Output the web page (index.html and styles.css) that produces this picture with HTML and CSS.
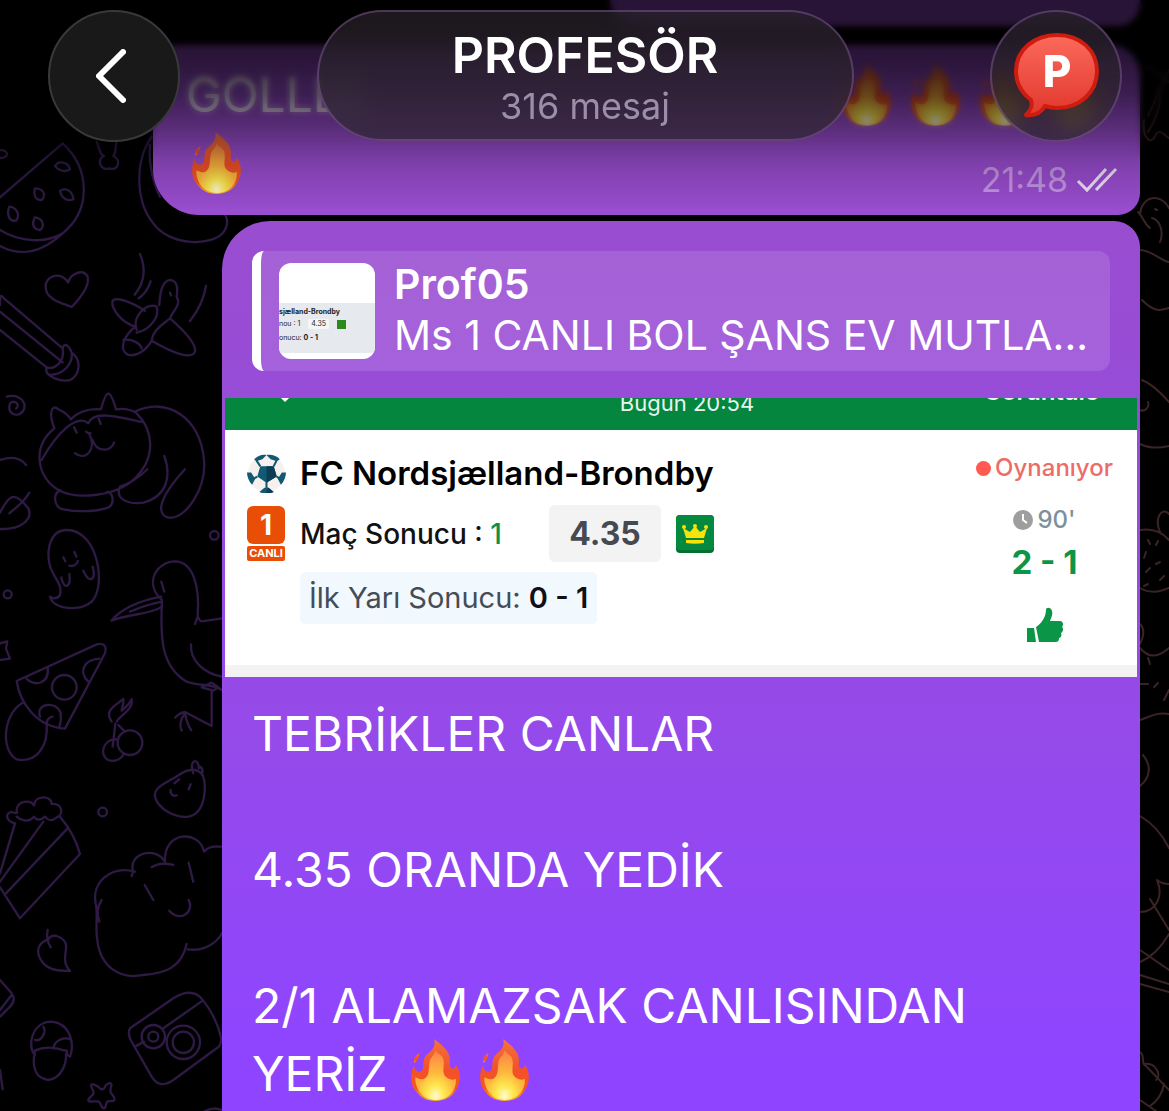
FILE: index.html
```html
<!DOCTYPE html>
<html lang="tr">
<head>
  <meta charset="UTF-8">
  <meta name="viewport" content="width=device-width, initial-scale=1.0">
  <title>PROFESÖR</title>
  <link rel="stylesheet" href="styles.css">
</head>
<body>
  <!-- shared icons -->
  <svg class="defs" aria-hidden="true">
    <defs>
      <linearGradient id="flameOuter" x1="0" y1="0" x2="0" y2="1">
        <stop offset="0" stop-color="#f4743b"/>
        <stop offset="0.5" stop-color="#f2502a"/>
        <stop offset="0.8" stop-color="#f9561d"/>
        <stop offset="1" stop-color="#fdb52a"/>
      </linearGradient>
      <radialGradient id="flameInner" cx="0.5" cy="0.92" r="0.85">
        <stop offset="0" stop-color="#fffbd0"/>
        <stop offset="0.25" stop-color="#ffe84f"/>
        <stop offset="0.55" stop-color="#ffb83d"/>
        <stop offset="1" stop-color="#fb8a45"/>
      </radialGradient>
      <linearGradient id="bubbleRed" x1="0" y1="0" x2="0" y2="1">
        <stop offset="0" stop-color="#fb6a5c"/>
        <stop offset="1" stop-color="#e2372c"/>
      </linearGradient>
    </defs>
    <symbol id="fire" viewBox="0 0 48 61">
      <path fill="url(#flameOuter)" d="M23 0C26 3 30 5 33 9C37 13 39 18 38 24C38 27 39 29 41 29C43 29 44 27 44 25C47 29 48 34 48 38C48 43 46 48 43 52C39 58 32 61 24 61C16 61 10 58 6 53C2 49 0 44 0 38C0 33 1 29 3 26C3 29 4 31 7 32C10 33 12 30 12 26C12 21 13 17 17 14C20 12 22 9 23 6Z"/>
      <path fill="url(#flameOuter)" d="M8 14C5 16 2 18 3 23C6 22 8 19 8 14Z"/>
      <path fill="url(#flameInner)" d="M24 11C23 17 18 18 18 24C17 31 18 36 13 39C9 41 6 38 4 38C4 48 10 60 24 60C38 60 45 49 44 39C41 41 36 40 33 36C30 31 34 24 31 18C29 15 25 14 24 11Z"/>
    </symbol>
  </svg>

  <!-- wallpaper, left side -->
  <svg class="doodles doodles-left" viewBox="0 0 240 1111" aria-hidden="true">
    <g transform="translate(0 130) scale(0.3333)">
      <path d="M0 202L188 40C270 115 275 240 188 310C120 372 60 380 0 348M0 300C60 338 140 340 188 310"/>
      <path d="M165 108C175 90 205 95 210 118C195 128 175 122 165 108ZM105 175C130 175 140 195 125 210C105 210 100 195 105 175ZM180 182C200 170 218 185 220 208C200 215 185 205 180 182ZM28 230C50 232 62 255 48 272C25 275 20 250 28 230ZM105 262C130 265 135 290 120 300C98 298 95 280 105 262Z"/>
      <path d="M0 60C28 60 28 84 0 84M290 35C300 60 300 75 312 78C290 85 300 125 327 115C355 125 365 90 340 78C350 65 345 50 350 35"/>
      <path d="M455 20C400 100 410 220 460 280C510 350 640 350 672 305C690 275 680 250 660 245M450 45C445 100 460 160 480 200"/>
      <path d="M205 458C180 420 135 440 137 470C137 510 190 520 215 531C240 505 270 470 263 440C250 415 210 430 205 458Z"/>
      <path d="M420 372C440 420 432 460 404 494M452 454C445 475 435 492 416 505M618 468C612 505 592 545 570 573"/>
      <path d="M478 525C480 480 490 450 512 450C535 455 533 480 530 500C545 525 520 540 510 565C550 600 590 640 585 665C575 690 520 670 455 632C440 660 410 680 385 675C355 660 370 620 405 590C360 575 335 535 337 515C345 495 400 520 435 542M410 600C395 560 440 515 470 530C480 560 450 600 410 608M510 565C480 590 460 600 455 632M370 630C395 625 420 640 425 655M510 488L513 496"/>
      <path d="M0 600L140 712C130 740 190 760 215 748C240 730 245 690 215 668C205 640 190 640 188 655L12 505C0 490 0 500 0 525M0 545L188 697M140 712C160 720 195 700 188 655M150 735C190 735 220 700 215 668"/>
      <path d="M20 800C60 790 85 820 68 845C50 865 20 850 30 820C45 808 62 825 48 836"/>
      <path d="M163 895C145 850 155 820 175 838C190 845 205 855 212 868C240 840 270 835 303 838C320 775 330 775 348 838C370 835 395 840 410 850C460 900 470 980 405 1045C350 1100 230 1110 175 1080C110 1040 95 950 163 895M125 990C170 910 230 850 265 880C280 840 350 860 425 876M405 845C500 800 600 860 612 990C620 1070 560 1170 505 1163C465 1150 480 1100 555 1018M493 978C515 1040 500 1100 430 1118C380 1125 345 1105 360 1070C390 1060 420 1040 442 1018"/>
      <path d="M222 892L230 908M296 866L302 882M258 905C270 915 275 905 268 912C290 955 260 995 225 970M278 930C290 970 335 965 342 938M180 1080C155 1095 165 1135 190 1138C235 1147 290 1145 325 1133C345 1120 340 1090 322 1085"/>
      <path d="M0 990C30 980 60 980 78 1005M0 1148C30 1090 45 1085 85 1135C100 1170 60 1200 0 1197M88 1088C70 1120 50 1130 28 1150"/>
    </g>
    <g transform="translate(0 500) scale(0.3333)">
      <path d="M200 90C150 90 140 150 148 190C155 230 190 250 180 285C170 300 155 295 150 290C160 330 240 335 275 305C320 260 295 90 200 90ZM190 172L196 184M223 156L229 170M208 197C218 200 230 195 234 183M184 232C190 270 215 265 208 222M250 212C265 250 290 245 278 200"/>
      <circle cx="23" cy="283" r="12"/><circle cx="643" cy="106" r="13"/><circle cx="308" cy="936" r="13"/>
      <path d="M0 430L22 424L18 446L30 476L0 480"/>
      <path d="M486 300C430 250 470 185 525 184C580 185 600 260 593 350L585 372M593 350C600 360 600 365 605 364L666 355M486 300C480 420 485 500 560 545C600 560 640 550 666 570M484 290C430 300 370 320 334 362C390 340 450 345 486 320M390 335C430 318 460 310 486 305M484 245L493 275M573 433C570 480 610 520 666 530M605 562L635 548L655 562L640 572ZM635 572V678L555 636C540 640 532 645 526 653M555 640C540 660 538 680 545 692M555 640C560 665 565 680 574 691"/>
      <path d="M50 543L290 433C315 428 320 440 315 460L195 686C110 680 60 610 50 543ZM80 536C100 560 150 555 143 500M298 476C250 480 235 515 265 545M120 650C105 610 170 600 182 640C185 660 180 675 178 682M68 608C10 640 0 750 50 778C110 790 145 740 140 670C140 655 155 650 158 650"/>
      <circle cx="193" cy="562" r="37"/>
      <circle cx="390" cy="728" r="37"/><path d="M352 718C310 715 295 765 325 780C345 788 365 775 370 765M338 740L346 672M355 675L375 695M335 665C310 630 350 615 370 597C372 615 365 625 365 632M365 632C380 620 390 610 395 598C400 630 360 645 350 665"/>
      <path d="M545 820C500 850 460 860 465 890C475 930 530 955 565 950C620 940 620 850 608 825C590 800 560 810 545 820ZM580 820C565 780 595 770 597 805M600 800C610 805 608 815 606 825M512 870C510 885 522 890 530 886M523 850L537 838M566 868L572 853"/>
      <path d="M45 970C20 965 12 940 35 936C50 942 55 938 50 936C45 905 90 895 102 916C105 885 155 885 155 912C190 910 190 945 170 952C150 970 140 955 135 950C115 970 100 950 102 950C85 970 60 960 50 950"/>
    </g>
    <g transform="translate(0 780) scale(0.3333)">
      <path d="M45 130L0 280M130 125L0 305M205 143L18 340M180 110C210 145 230 185 240 222L60 415L0 322"/>
      <path d="M143 450C138 470 145 490 152 502M145 478C110 490 105 520 130 550C155 575 190 572 210 573C170 530 230 490 170 468C160 466 150 470 145 478Z"/>
      <path d="M395 288C400 275 400 275 398 270C390 215 470 200 495 245C490 150 600 150 612 215C630 195 650 200 666 200M405 275C330 255 275 310 287 370C295 400 285 440 292 480C300 560 360 600 430 585C500 580 545 560 560 492M563 508C610 515 650 490 666 460M455 262C475 248 500 250 520 255M434 315L460 360M566 248L580 305M508 392C540 430 585 395 566 360M305 360C290 385 290 400 298 425"/>
      <path d="M0 600L35 640C45 655 40 670 30 680L0 710M35 645L0 690"/>
      <path d="M105 825C80 800 95 725 155 725C210 730 225 790 210 830L198 822C205 815 200 810 195 812C160 800 130 800 105 812C95 860 105 895 145 900C185 895 200 850 198 822M105 780C125 785 140 755 130 740M160 805C165 780 190 770 212 778"/>
      <path d="M390 745L520 655C560 630 590 635 610 662C640 700 655 735 664 775C664 790 660 800 650 805L520 900C490 920 470 915 455 890L392 780C385 765 385 755 390 745ZM405 800L432 785M490 745L608 662"/>
      <circle cx="460" cy="770" r="35"/><circle cx="460" cy="770" r="15"/><circle cx="550" cy="787" r="50"/><circle cx="550" cy="787" r="32"/>
      <path d="M300 925C305 930 312 928 314 922C318 912 332 905 334 912C336 920 328 932 332 938C336 944 348 955 342 962C336 966 325 960 321 966C317 974 318 984 312 985C304 985 302 968 297 965C290 962 268 968 265 962C264 954 280 946 281 940C282 932 270 918 274 914C282 910 294 920 300 925Z"/>
      <path d="M0 870L8 928M615 993C640 982 650 985 666 990"/>
    </g>
  </svg>

  <!-- wallpaper, right side -->
  <svg class="doodles doodles-right" viewBox="0 0 69 1111" aria-hidden="true">
    <path d="M46 64C54 72 64 78 69 82M44 120C42 140 52 146 56 134C62 128 66 138 69 138M48 132C60 112 62 100 58 88M48 116L69 70"/>
    <path d="M40 214C42 196 60 192 69 208M38 212C44 218 44 224 50 228M52 218C60 220 64 232 60 242M55 209L57 210M40 250C52 250 62 262 69 262M42 300C52 310 58 312 69 308"/>
    <path d="M42 380C52 384 62 394 69 402M40 410C44 412 50 408 48 402M40 444C50 449 60 448 69 446"/>
    <path d="M40 530C52 528 62 532 69 540M60 532C54 518 62 506 69 514M40 588C50 594 60 592 69 588M48 540L50 544M58 541L56 545M46 552L44 558M60 562L56 564M50 568L46 572M64 576L60 580M48 584L44 586"/>
    <path d="M40 624C46 630 42 640 40 644M40 648C50 660 60 656 69 648M48 658L50 664M40 684H48M54 687L58 683M64 700L69 690M40 720C48 718 54 712 69 714M43 755C52 766 50 778 40 786M40 816C54 824 64 838 69 848"/>
    <path d="M57 880C62 884 66 884 69 884M57 880C64 896 56 912 40 912M50 899L69 930M69 934C62 946 54 956 40 962M40 950L69 970M40 975L69 984M40 984L69 992M40 1052C46 1056 40 1064 46 1066L69 1090M44 1064C56 1062 62 1076 56 1080M40 1100L56 1111M64 1084C62 1096 56 1102 50 1106"/>
  </svg>

  <header class="topbar">
    <button class="glass round" type="button" aria-label="Geri">
      <svg class="chevron" viewBox="0 0 30 54"><path d="M27 3L3 27L27 51"/></svg>
    </button>
    <div class="glass title">
      <h1>PROFESÖR</h1>
      <p>316 mesaj</p>
    </div>
    <button class="glass round" type="button" aria-label="Profil">
      <svg class="avatar" viewBox="0 0 85 86">
        <path d="M43 2C66 2 83 17 83 38C83 60 65 75 43 75C38 75 34 74 31 73C27 80 20 83 12 82C17 77 19 73 17 67C8 60 2 50 2 38C2 17 20 2 43 2Z"/>
        <text x="43" y="54">P</text>
      </svg>
    </button>
  </header>

  <main class="chat">
    <div class="bubble bubble-cut"></div>

    <article class="bubble bubble-goal">
      <div class="line">
        <span>GOLLLL</span>
        <span class="fires">
          <svg class="fire"><use href="#fire"/></svg>
          <svg class="fire"><use href="#fire"/></svg>
          <svg class="fire"><use href="#fire"/></svg>
          <svg class="fire"><use href="#fire"/></svg>
        </span>
      </div>
      <div class="line">
        <svg class="fire"><use href="#fire"/></svg>
        <span class="meta">
          <time>21:48</time>
          <svg class="ticks" viewBox="0 0 42 26"><path d="M2 14L11 23L30 2M20 23L40 2"/></svg>
        </span>
      </div>
    </article>

    <article class="bubble bubble-win">
      <blockquote class="reply">
        <div class="thumb" aria-hidden="true">
          <div class="thumb-match">
            <b>sjælland-Brondby</b>
            <div class="thumb-row"><span>nou : 1</span><i>4.35</i><em></em></div>
            <div class="thumb-row"><span>onucu: <strong>0 - 1</strong></span></div>
          </div>
        </div>
        <div class="reply-text">
          <strong>Prof05</strong>
          <span>Ms 1 CANLI BOL ŞANS EV MUTLA...</span>
        </div>
      </blockquote>

      <section class="coupon">
        <div class="coupon-top">
          <svg class="back-tip" viewBox="0 0 20 12"><path d="M2 0L10 8L18 0"/></svg>
          <span class="date">Bugün 20:54</span>
          <span class="view">Görüntüle</span>
        </div>
        <div class="coupon-body">
          <div class="match">
            <svg class="ball" viewBox="0 0 38 38">
              <circle cx="19" cy="19" r="18" fill="#f6f1ee"/>
              <path fill="#125a74" d="M13 12L26 12L29 22L19 28L10 22ZM7 5C11 1 16 0 19 1L15 5L9 7ZM19 1C24 0 29 2 32 5L29 7L23 5ZM0 18L4 18L8 24L5 30C2 27 0 22 0 18ZM38 18L34 18L30 24L33 30C36 27 38 22 38 18ZM12 37L17 33L21 33L26 37C22 39 16 39 12 37Z"/>
              <path fill="#0c3d54" d="M19 12L26 12L29 22L19 28ZM19 33H21L26 37C24 38 22 38 19 38Z"/>
              <path stroke="#125a74" stroke-width="2" d="M13 12L9 6M26 12L29 6M29 22L33 25M10 22L5 25M19 27V35"/>
            </svg>
            <h2>FC Nordsjælland-Brondby</h2>

            <div class="live"><b>1</b><small>CANLI</small></div>
            <div class="pick">
              <span>Maç Sonucu : <em>1</em></span>
              <strong class="odds">4.35</strong>
              <svg class="crown" viewBox="0 0 38 38">
                <rect width="38" height="38" rx="4" fill="#04702f"/>
                <rect width="38" height="35" rx="4" fill="#04893f"/>
                <path fill="#f6e30a" d="M10 23L7 13L14 17L19 11L24 17L31 13L28 23ZM10 25H28V28C22 29 16 29 10 28Z"/>
                <circle cx="8" cy="12" r="2" fill="#f6e30a"/><circle cx="19" cy="11" r="2" fill="#f6e30a"/><circle cx="30" cy="12" r="2" fill="#f6e30a"/>
              </svg>
            </div>

            <div class="half">İlk Yarı Sonucu: <b>0 - 1</b></div>
          </div>

          <div class="status">
            <span class="playing">Oynanıyor</span>
            <span class="minute">
              <svg viewBox="0 0 20 20"><circle cx="10" cy="10" r="10" fill="#9e9e9e"/><path d="M10 4V10L14 13" fill="none" stroke="#fff" stroke-width="2"/></svg>
              90'
            </span>
            <strong class="score">2 - 1</strong>
            <svg class="thumb-up" viewBox="0 0 36 36">
              <path d="M0 21H7L9 35H0ZM9 20C14 17 19 10 19 3C19 0 24 0 25 4C26 8 24 11 23 14H33C36 14 37 18 35 20C37 22 36 25 34 26C35 28 34 31 32 31C32 34 31 35 28 35H12Z"/>
            </svg>
          </div>
        </div>
      </section>

      <div class="text">
        <p>TEBRİKLER CANLAR</p>
        <p>4.35 ORANDA YEDİK</p>
        <p>2/1 ALAMAZSAK CANLISINDAN<br>YERİZ <span class="fires"><svg class="fire"><use href="#fire"/></svg><svg class="fire"><use href="#fire"/></svg></span></p>
      </div>
    </article>
  </main>
</body>
</html>
```

FILE: styles.css
```css
:root {
  --bubble-top: #994dcf;
  --bubble-bottom: #8f45ff;
  --green: #04863f;
  --doodle-left: #2e1a45;
  --doodle-right: #3a2425;
}
* { box-sizing: border-box; }
body {
  position: relative;
  margin: 0;
  height: 100vh;
  overflow: hidden;
  background: #000;
  color: #fff;
  font-family: Inter, 'Liberation Sans', sans-serif;
}
h1, h2, p, blockquote { margin: 0; }
button { padding: 0; font: inherit; color: inherit; cursor: pointer; }
.defs { position: absolute; width: 0; height: 0; }

/* wallpaper */
.doodles {
  position: absolute; top: 0;
  height: 1111px;
  fill: none;
  stroke-linecap: round; stroke-linejoin: round;
}
.doodles-left { left: 0; width: 240px; stroke: var(--doodle-left); stroke-width: 7; }
.doodles-right { right: 0; width: 69px; stroke: var(--doodle-right); stroke-width: 2; }

/* header floats over the messages */
.topbar {
  position: absolute; z-index: 2;
  top: 0; left: 0; right: 0;
  display: flex; justify-content: space-between; align-items: flex-start;
  height: 210px;
  padding: 10px 47px 0 48px;
}
.topbar::before, .topbar::after {
  content: '';
  position: absolute; inset: 0; z-index: -1;
}
.topbar::before {
  backdrop-filter: blur(3px);
  mask-image: linear-gradient(#000 35%, transparent 75%);
}
.topbar::after {
  background: linear-gradient(rgba(0,0,0,0.74) 0, rgba(0,0,0,0.72) 60px, rgba(0,0,0,0.6) 95px, rgba(0,0,0,0.4) 130px, rgba(0,0,0,0.18) 162px, transparent);
}
.glass {
  display: flex; flex-direction: column; align-items: center; justify-content: center;
  border: 2px solid rgba(190,130,220,0.3);
  border-radius: 66px;
  background: rgba(42,36,44,0.66);
  backdrop-filter: blur(12px);
}
.round { width: 132px; height: 132px; }
.round:first-child { background: #19191a; border-color: #39393b; }
.title { width: 50%; height: 131px; padding-top: 4px; }
.title h1 { font-size: 50px; font-weight: 600; line-height: 56px; }
.title p { font-size: 36px; line-height: 46px; color: #9c8ea8; }
.chevron {
  width: 30px; height: 54px;
  margin-right: 6px;
  fill: none; stroke: #fff; stroke-width: 6;
  stroke-linecap: round; stroke-linejoin: round;
}
.avatar { width: 85px; height: 86px; }
.avatar path { fill: url(#bubbleRed); stroke: #cf1c10; stroke-width: 4; stroke-linejoin: round; }
.avatar text { fill: #fff; font-size: 44px; font-weight: 800; text-anchor: middle; }

/* messages */
.chat {
  position: relative;
  display: flex; flex-direction: column;
  height: 100%;
  padding-right: 29px;
}
.bubble { flex: none; background: var(--bubble-top); }
.bubble-cut {
  height: 26px;
  margin: 0 0 19px 610px;
  border-radius: 0 0 22px 26px;
}
.bubble-goal {
  margin: 0 0 6px 153px;
  padding: 16px 22px 18px 33px;
  border-radius: 24px 30px 22px 46px;
}
.line {
  display: flex; align-items: center; justify-content: space-between;
  height: 68px;
  font-size: 48px; line-height: 68px;
}
.line:first-child { padding-right: 20px; }
.fires { display: inline-flex; gap: 20px; }
.fire { display: block; width: 49px; height: 62px; margin-left: 6px; }
.fires .fire { margin-left: 0; }
.meta {
  display: flex; align-items: center; gap: 8px;
  padding-top: 34px;
  font-size: 34px; line-height: 34px;
  color: #c396e2;
}
.ticks { width: 42px; height: 26px; fill: none; stroke: #efe2f8; stroke-width: 3; }
.bubble-win {
  flex: 1 0 auto;
  margin-left: 222px;
  padding-top: 30px;
  border-radius: 48px 26px 0 0;
  background: linear-gradient(var(--bubble-top), #954aea 55%, var(--bubble-bottom) 90%);
}

/* quoted message */
.reply {
  display: flex; align-items: center; gap: 19px;
  height: 120px;
  margin: 0 30px 27px;
  padding-left: 18px;
  border-left: 9px solid #fff;
  border-radius: 12px;
  background: rgba(255,255,255,0.12);
}
.thumb {
  flex: none;
  display: flex; flex-direction: column;
  width: 96px; height: 96px;
  padding: 40px 0 6px;
  border-radius: 12px;
  background: #fff;
  overflow: hidden;
}
.thumb-match {
  flex: 1;
  padding-top: 4px;
  background: #e6e9ed;
  color: #222;
  font-size: 7px; line-height: 10px;
  white-space: nowrap;
}
.thumb-match b { display: block; font-size: 7px; }
.thumb-row { display: flex; align-items: center; gap: 8px; height: 14px; }
.thumb-row i { padding: 0 3px; background: #f3f5f7; font-style: normal; }
.thumb-row em { width: 9px; height: 9px; background: #2c8a1c; }
.reply-text { display: flex; flex-direction: column; padding-bottom: 4px; white-space: nowrap; }
.reply-text strong { font-size: 41px; font-weight: 600; line-height: 52px; }
.reply-text span { font-size: 41px; line-height: 50px; }

/* bet coupon picture */
.coupon {
  margin: 0 3px;
  background: #fff;
  border-bottom: 12px solid #f3f3f3;
  color: #111;
}
/* the strip shows only the lower part of its labels */
.coupon-top {
  display: grid; grid-template-columns: 1fr auto 1fr;
  align-items: start;
  height: 32px;
  padding: 0 38px 0 50px;
  overflow: hidden;
  background: var(--green);
  color: #e8f5ee;
}
.back-tip { width: 20px; height: 12px; margin-top: -6px; fill: none; stroke: #fff; stroke-width: 3; }
.date { margin-top: -8px; font-size: 22px; line-height: 26px; }
.view { justify-self: end; margin-top: -18px; font-size: 24px; font-weight: 600; line-height: 24px; }
.coupon-body {
  display: flex; justify-content: space-between;
  height: 235px;
  padding: 22px 24px 0 22px;
}
.match {
  display: grid; grid-template-columns: 38px auto;
  column-gap: 15px;
  align-content: start; align-items: center;
}
.ball { width: 39px; height: 39px; }
.match h2 { font-size: 33px; font-weight: 600; line-height: 42px; color: #000; }
.live {
  display: flex; flex-direction: column; gap: 2px;
  color: #fff;
  text-align: center;
}
.live b { border-radius: 6px; background: #e84e06; font-size: 28px; line-height: 38px; }
.live small { border-radius: 2px; background: #e84e06; font-size: 11px; font-weight: 700; line-height: 15px; }
.pick {
  display: flex; align-items: center;
  margin: 11px 0 10px;
  font-size: 28px; font-weight: 500;
}
.pick em { color: #0b9349; font-style: normal; }
.odds {
  margin: 0 15px 0 auto;
  padding: 0 20px;
  border-radius: 6px;
  background: #f3f3f3;
  color: #454a50;
  font-size: 32px; line-height: 57px;
}
.crown { width: 38px; height: 38px; }
.half {
  grid-column: 2; justify-self: start;
  padding: 0 9px;
  border-radius: 5px;
  background: #f1f8fe;
  color: #454c55;
  font-size: 29px; line-height: 52px;
}
.half b { color: #111; font-weight: 600; }
.status { display: flex; flex-direction: column; align-items: center; }
.playing {
  display: flex; align-items: center; gap: 4px;
  color: #ee6c67;
  font-size: 24px; font-weight: 500; line-height: 32px;
}
.playing::before {
  content: '';
  width: 15px; height: 15px;
  border-radius: 50%;
  background: #ff5a52;
}
.minute {
  display: flex; align-items: center; gap: 4px;
  margin-top: 20px;
  color: #7e909b;
  font-size: 24px; font-weight: 500; line-height: 32px;
}
.minute svg { width: 20px; height: 20px; }
.score { margin: 6px 0 25px; color: #0a9547; font-size: 33px; line-height: 40px; }
.thumb-up { width: 36px; height: 36px; fill: #0a9547; }

.text { padding: 23px 30px 40px; font-size: 48px; line-height: 68px; }
.text p { margin-bottom: 68px; }
.text p:last-child { margin-bottom: 0; }
.text .fires { margin: -8px 0 0 10px; vertical-align: middle; }
.text .fires .fire { margin-bottom: 8px; }
```
